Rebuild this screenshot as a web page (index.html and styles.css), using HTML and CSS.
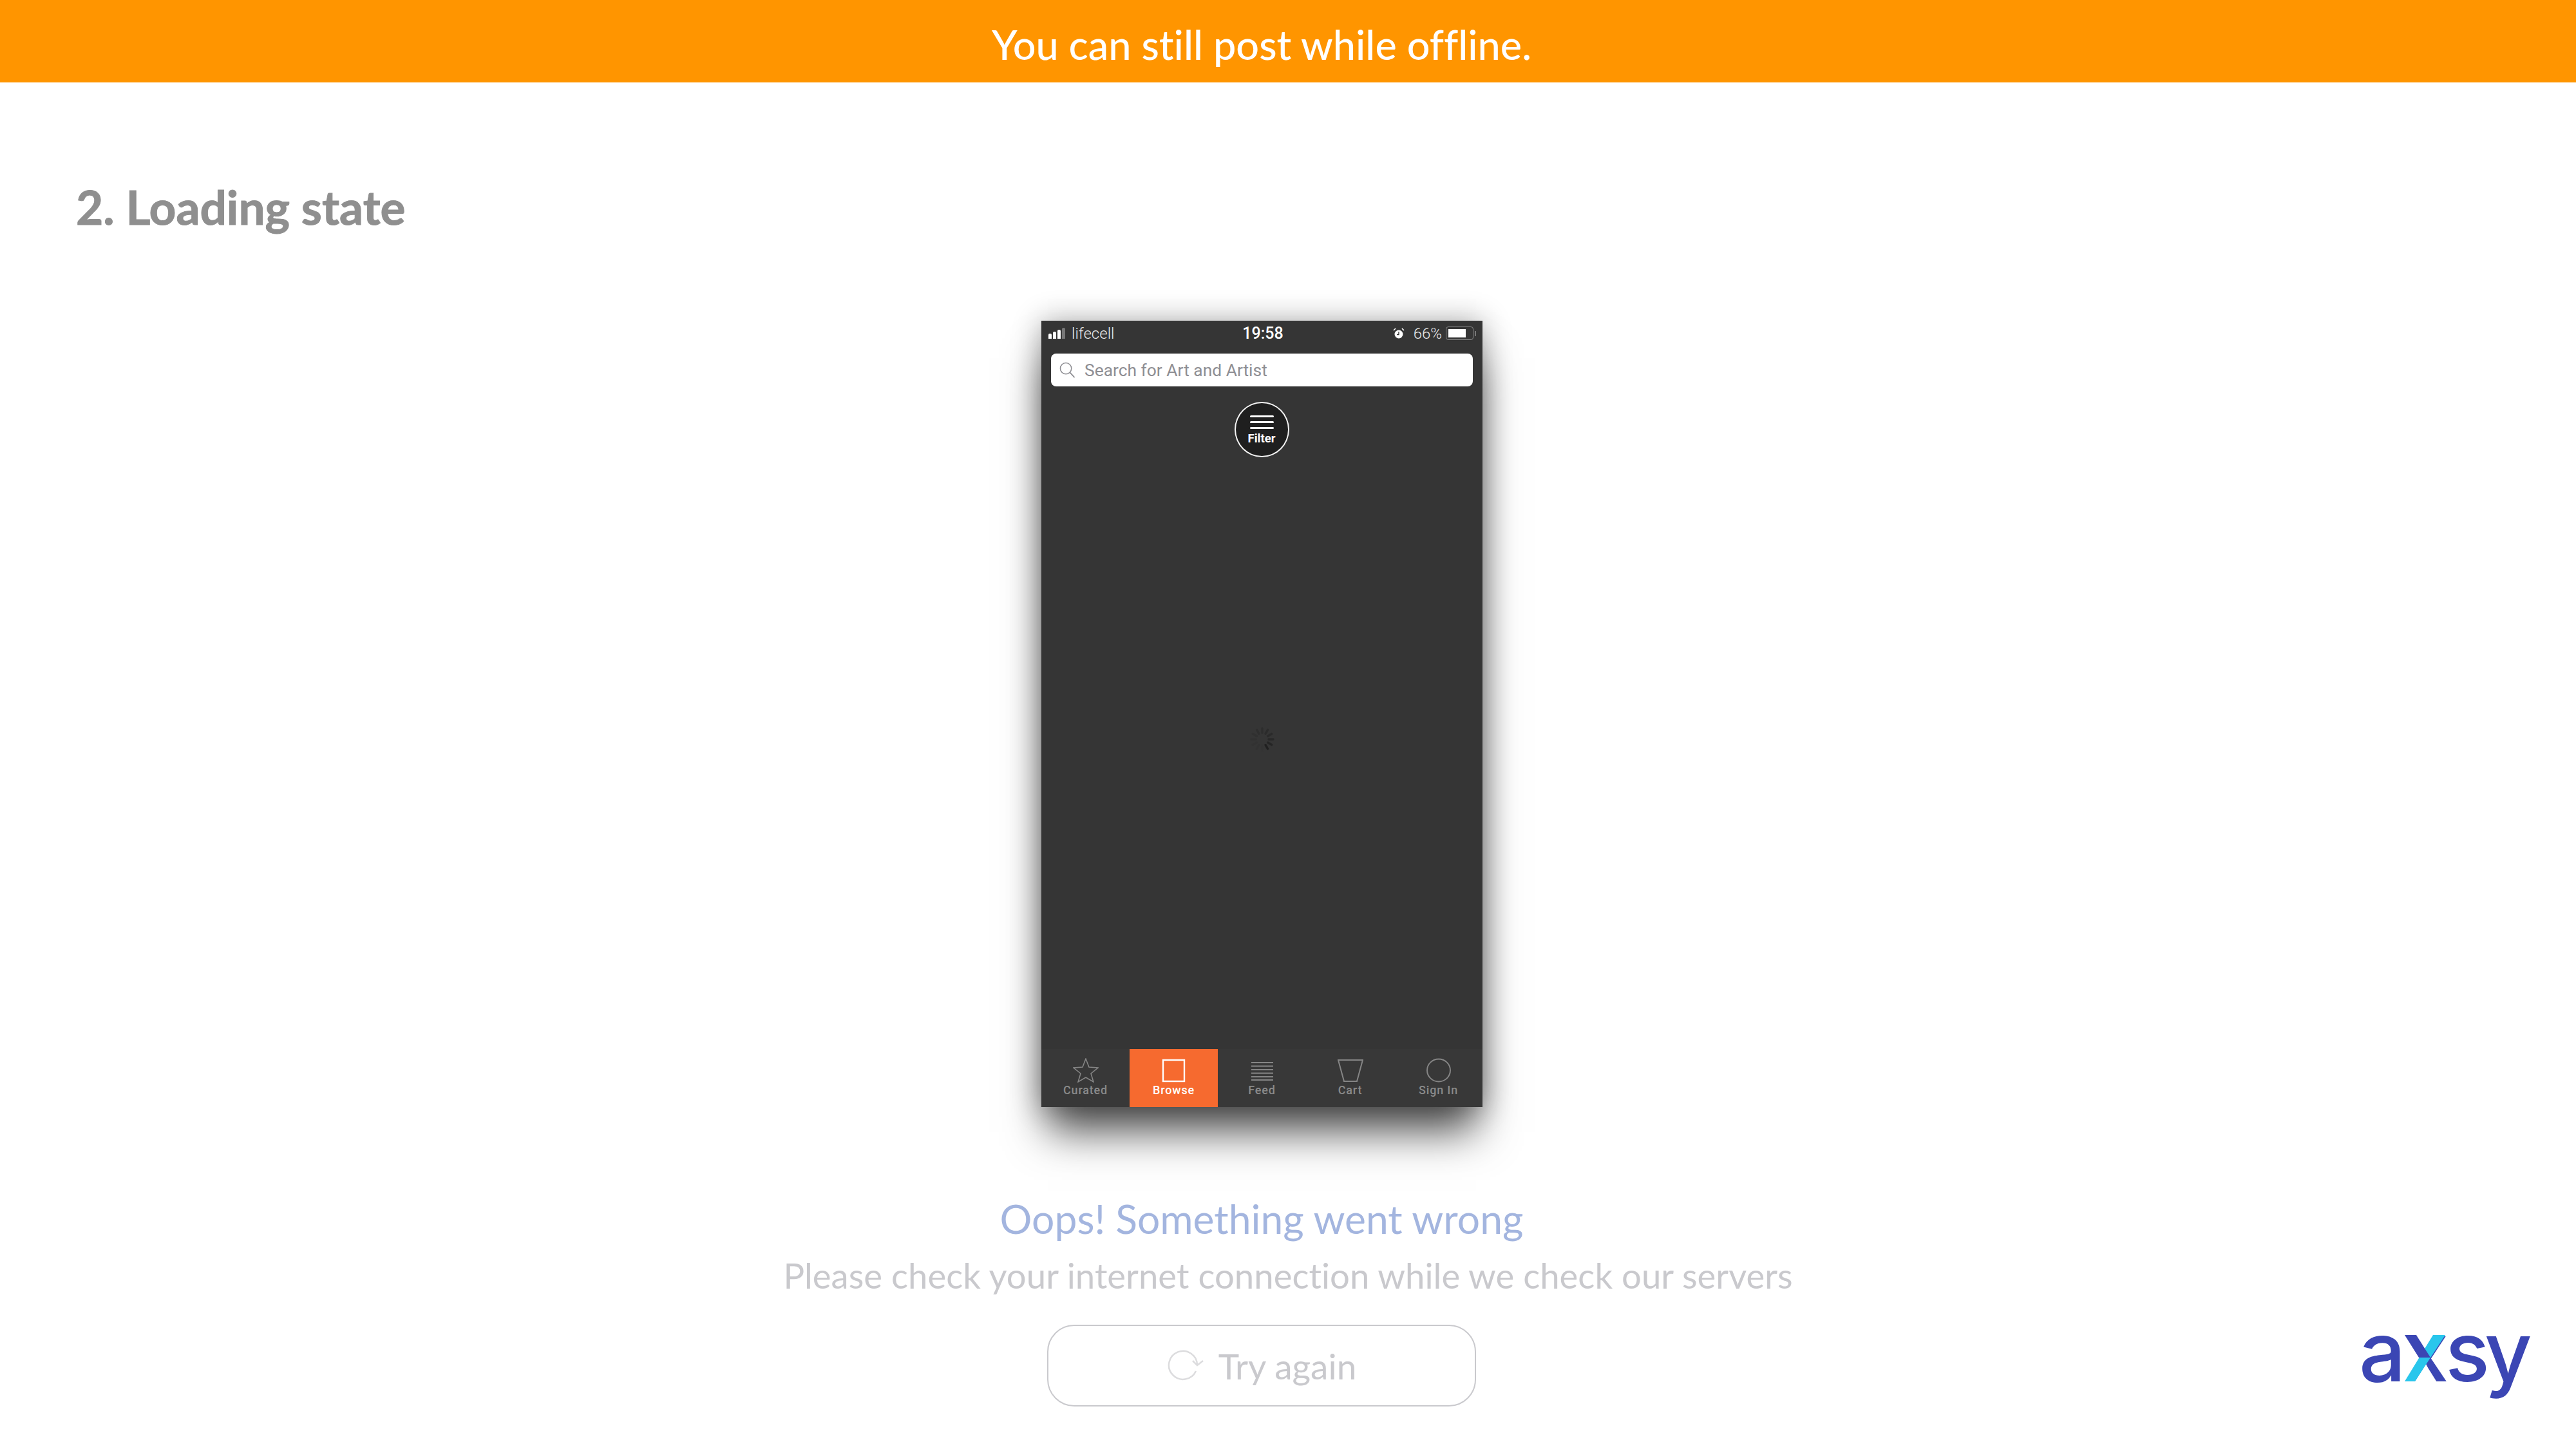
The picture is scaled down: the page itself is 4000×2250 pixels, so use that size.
FILE: index.html
```html
<!DOCTYPE html>
<html lang="en">
<head>
    <meta charset="UTF-8">
    <title>2. Loading state</title>
    <link rel="stylesheet" href="styles.css">
</head>
<body>
    <header class="offline-banner">You can still post while offline.</header>
    <h1 class="state-title">2. Loading state</h1>

    <div class="phone-wrap">
        <div class="phone">
            <div class="status-bar">
                <div class="status-left">
                    <span class="signal"><i></i><i></i><i></i><i class="off"></i></span>
                    <span>lifecell</span>
                </div>
                <div class="status-time">19:58</div>
                <div class="status-right">
                    <svg class="alarm" viewBox="0 0 18 18">
                        <circle cx="9" cy="10" r="6.500" fill="#fff"/>
                        <path d="M9 6v4.500H6" fill="none" stroke="#333" stroke-width="1.400"/>
                        <path d="M1 4l3-3M17 4l-3-3" stroke="#fff" stroke-width="1.600"/>
                    </svg>
                    <span>66%</span>
                    <span class="battery"><i></i></span>
                    <span class="battery-nub"></span>
                </div>
            </div>

            <div class="search">
                <svg class="search-icon" viewBox="0 0 26 26">
                    <circle cx="10.500" cy="10.500" r="9" fill="none" stroke="#8e8e93" stroke-width="1.600"/>
                    <path d="M17 17l7.500 8" stroke="#8e8e93" stroke-width="1.800"/>
                </svg>
                <span>Search for Art and Artist</span>
            </div>

            <div class="filter">
                <span class="filter-lines"><i></i><i></i><i></i></span>
                <span class="filter-label">Filter</span>
            </div>

            <div class="phone-body">
                <svg class="spinner" width="40" height="40" viewBox="-20 -20 40 40">
                    <g stroke="#1c1c1c" stroke-width="3.400" stroke-linecap="round">
                        <line x1="0" y1="-10" x2="0" y2="-17" transform="rotate(0)" opacity=".3"/>
                        <line x1="0" y1="-10" x2="0" y2="-17" transform="rotate(30)" opacity=".36"/>
                        <line x1="0" y1="-10" x2="0" y2="-17" transform="rotate(60)" opacity=".42"/>
                        <line x1="0" y1="-10" x2="0" y2="-17" transform="rotate(90)" opacity=".5"/>
                        <line x1="0" y1="-10" x2="0" y2="-17" transform="rotate(120)" opacity=".6"/>
                        <line x1="0" y1="-10" x2="0" y2="-17" transform="rotate(150)" opacity=".8"/>
                        <line x1="0" y1="-10" x2="0" y2="-17" transform="rotate(180)" opacity=".06"/>
                        <line x1="0" y1="-10" x2="0" y2="-17" transform="rotate(210)" opacity=".08"/>
                        <line x1="0" y1="-10" x2="0" y2="-17" transform="rotate(240)" opacity=".1"/>
                        <line x1="0" y1="-10" x2="0" y2="-17" transform="rotate(270)" opacity=".14"/>
                        <line x1="0" y1="-10" x2="0" y2="-17" transform="rotate(300)" opacity=".18"/>
                        <line x1="0" y1="-10" x2="0" y2="-17" transform="rotate(330)" opacity=".24"/>
                    </g>
                </svg>
            </div>

            <nav class="tabs">
                <div class="tab">
                    <svg viewBox="0 0 40 38" width="40" height="38"><polygon points="20,1 25,14 39,15 28,24 32,37 20,30 8,37 12,24 1,15 15,14" fill="none" stroke="#858585" stroke-width="1.600"/></svg>
                    <span>Curated</span>
                </div>
                <div class="tab active">
                    <svg viewBox="0 0 40 38" width="40" height="38"><rect x="3" y="3" width="33" height="33" fill="none" stroke="#fff" stroke-width="2.400"/></svg>
                    <span>Browse</span>
                </div>
                <div class="tab">
                    <svg viewBox="0 0 40 38" width="40" height="38"><path d="M3 7h34M3 12.500h34M3 18h34M3 23.500h34M3 29h34M3 34h34" fill="none" stroke="#858585" stroke-width="2"/></svg>
                    <span>Feed</span>
                </div>
                <div class="tab">
                    <svg viewBox="0 0 40 38" width="40" height="38"><polygon points="1,3 39,3 30,36 10,36" fill="none" stroke="#858585" stroke-width="2"/></svg>
                    <span>Cart</span>
                </div>
                <div class="tab">
                    <svg viewBox="0 0 40 38" width="40" height="38"><ellipse cx="20" cy="19" rx="18" ry="17.500" fill="none" stroke="#858585" stroke-width="2"/></svg>
                    <span>Sign In</span>
                </div>
            </nav>
        </div>
    </div>

    <p class="error-title">Oops! Something went wrong</p>
    <p class="error-text">Please check your internet connection while we check our servers</p>

    <div class="bottom-row">
        <button class="retry" type="button">
            <svg class="retry-icon" viewBox="0 0 60 60">
                <path d="M47 26A22 22 0 1 0 45 35" fill="none" stroke="#dcdcde" stroke-width="2.500"/>
                <path d="M40 19l7 7 9-7" fill="none" stroke="#dcdcde" stroke-width="2.500"/>
            </svg>
            <span>Try again</span>
        </button>
        <svg class="logo" width="330" height="130" viewBox="0 0 330 130">
            <text x="3" y="85" class="logo-text">a</text>
            <text x="71" y="85" class="logo-text">x</text>
            <text x="137" y="85" class="logo-text">s</text>
            <text x="198" y="85" class="logo-text">y</text>
            <polygon points="118,13 137,13 90,85 74,85" fill="#29c6ec"/>
            <polygon points="74,13 92,13 114,48 96,48" fill="#3b46b4"/>
        </svg>
    </div>
</body>
</html>
```

FILE: styles.css
```css
* {
    box-sizing: border-box;
}
body {
    margin: 0;
    width: 4000px;
    height: 2250px;
    overflow: hidden;
    background: #fff;
    font-family: Lato, "Open Sans", sans-serif;
    font-variant-ligatures: none;
}
.offline-banner {
    height: 128px;
    padding-top: 30px;
    padding-right: 82px;
    background: #ff9500;
    color: #fff;
    font-size: 63px;
    line-height: 78px;
    font-weight: 500;
    text-align: center;
}
.state-title {
    margin: 0;
    padding: 148px 0 0 118px;
    height: 370px;
    font-size: 73px;
    line-height: 90px;
    font-weight: 700;
    -webkit-text-stroke: 1px #8f8f8f;
    color: #8f8f8f;
}
.phone-wrap {
    padding-left: 1617px;
}
.phone {
    display: flex;
    flex-direction: column;
    width: 685px;
    height: 1221px;
    background: #353535;
    box-shadow: 0 48px 62px -10px rgba(0, 0, 0, .68), 0 0 42px rgba(0, 0, 0, .32);
    font-family: Roboto, sans-serif;
}

/* status bar */
.status-bar {
    display: grid;
    grid-template-columns: 1fr auto 1fr;
    align-items: center;
    height: 51px;
    padding: 0 10px 12px 11px;
    color: #e8e8e8;
    font-size: 24px;
}
.status-left {
    display: flex;
    align-items: center;
    gap: 10px;
    font-weight: 300;
}
.signal {
    display: flex;
    align-items: flex-end;
    gap: 2px;
    height: 17px;
}
.signal i {
    width: 5px;
    border-radius: 2px 2px 0 0;
    background: #fff;
}
.signal i:nth-child(1) { height: 8px; }
.signal i:nth-child(2) { height: 11px; }
.signal i:nth-child(3) { height: 14px; }
.signal i:nth-child(4) { height: 17px; }
.signal .off {
    background: #777;
}
.status-time {
    margin-left: 2px;
    color: #fff;
    font-size: 25px;
    font-weight: 500;
}
.status-right {
    display: flex;
    align-items: center;
    justify-content: flex-end;
    font-weight: 300;
}
.alarm {
    width: 18px;
    height: 18px;
    margin-right: 14px;
}
.battery {
    display: block;
    width: 43px;
    height: 21px;
    margin-left: 6px;
    padding: 3px;
    border: 1px solid #888;
    border-radius: 4px;
}
.battery i {
    display: block;
    width: 27px;
    height: 13px;
    background: #fff;
}
.battery-nub {
    width: 2px;
    height: 8px;
    margin-left: 2px;
    background: #777;
}

/* search field */
.search {
    display: flex;
    align-items: center;
    gap: 14px;
    height: 51px;
    margin: 0 15px;
    padding-left: 13px;
    border-radius: 8px;
    background: #fff;
    color: #8e8e93;
    font-size: 26.400px;
}
.search-icon {
    width: 25px;
    height: 25px;
}

/* round filter button */
.filter {
    display: flex;
    flex-direction: column;
    align-items: center;
    align-self: center;
    width: 85px;
    height: 86px;
    margin-top: 24px;
    margin-right: 1px;
    padding-top: 19px;
    border: 2px solid #f2f2f2;
    border-radius: 50%;
    background: #1f1f1f;
    color: #fff;
}
.filter-lines {
    display: flex;
    flex-direction: column;
    gap: 6px;
}
.filter-lines i {
    display: block;
    width: 37px;
    height: 3px;
    border-radius: 2px;
    background: #fff;
}
.filter-label {
    margin-top: 4px;
    font-size: 18.500px;
    line-height: 22px;
    font-weight: 700;
}

.phone-body {
    flex: 1;
    display: flex;
    align-items: center;
    justify-content: center;
    padding-bottom: 44px;
}

/* tab bar */
.tabs {
    display: grid;
    grid-template-columns: repeat(5, 1fr);
    height: 90px;
    background: #383838;
}
.tab {
    display: flex;
    flex-direction: column;
    align-items: center;
    padding-top: 14px;
    color: #8a8a8a;
    font-size: 18px;
    line-height: 24px;
    font-weight: 500;
    letter-spacing: .8px;
}
.tab.active {
    background: #f66a2f;
    color: #fff;
}

/* message below the phone */
.error-title {
    margin: 138px 0 0;
    padding-right: 82px;
    color: #a3b5df;
    font-size: 62.400px;
    line-height: 70px;
    text-align: center;
}
.error-text {
    margin: 20px 0 0;
    color: #c9c9cd;
    font-size: 54.500px;
    line-height: 66px;
    text-align: center;
}
.bottom-row {
    display: grid;
    grid-template-columns: 1626px 666px 1fr;
    margin-top: 44px;
}
.retry {
    grid-column: 2;
    display: flex;
    align-items: center;
    justify-content: center;
    gap: 20px;
    height: 127px;
    padding: 0;
    border: 2px solid #c9c9cd;
    border-radius: 42px;
    background: #fff;
    color: #c9c9cd;
    font-family: Lato, sans-serif;
    font-size: 55px;
    font-variant-ligatures: none;
}
.retry-icon {
    width: 60px;
    height: 60px;
    margin-top: 6px;
}
.logo {
    justify-self: end;
    margin-top: 3px;
    margin-right: 10px;
}
.logo-text {
    font-family: Inter, sans-serif;
    font-size: 128px;
    font-weight: 500;
    fill: #3b46b4;
}
```
